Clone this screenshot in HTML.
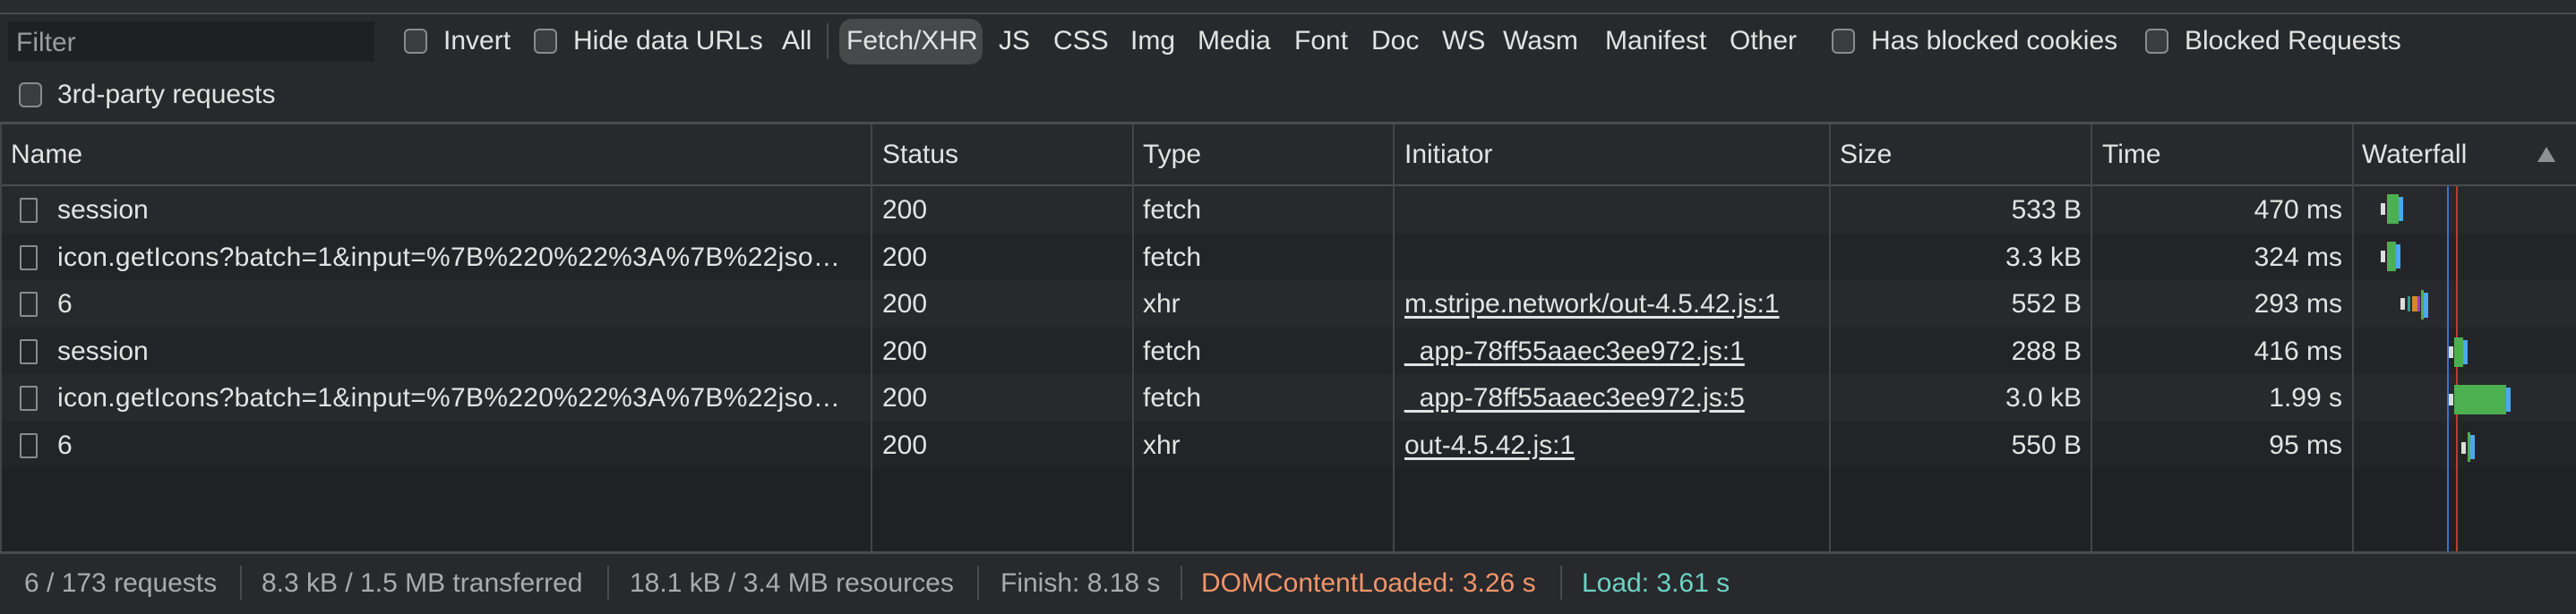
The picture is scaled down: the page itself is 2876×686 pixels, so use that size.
<!DOCTYPE html>
<html><head><meta charset="utf-8"><style>
*{box-sizing:border-box;margin:0;padding:0}
body{width:2876px;height:686px;background:#202124;font-family:"Liberation Sans",Arial,sans-serif;color:#e3e3e3;font-size:30px;position:relative;overflow:hidden}
.a{position:absolute;white-space:nowrap}
.cb{position:absolute;width:26px;height:28px;border:2px solid #8a8b8e;border-radius:6px;background:#3b3c3f}
.t{transform:translateY(-50%)}
.row{position:absolute;left:0;width:2876px;height:52.5px}
.vl{position:absolute;width:2px;background:#444548}
.ic{position:absolute;left:22px;width:20px;height:28px;border:2px solid #8a8b8e;border-radius:2px}
.r{text-align:right}
u{text-decoration:underline;text-underline-offset:4px}
.ft{color:#a8abb0}
.sep{position:absolute;top:632px;width:2px;height:38px;background:#4a4b4e}
.nm{letter-spacing:0.3px}
.f{font-size:30px}
</style></head><body>
<div class="a" style="left:0;top:0;width:2876px;height:14px;background:#2a2b2e"></div>
<div class="a" style="left:0;top:14px;width:2876px;height:2px;background:#4a4c50"></div>
<div class="a" style="left:0;top:16px;width:2876px;height:121px;background:#28292c"></div>
<div class="a" style="left:9px;top:24px;width:409px;height:45px;background:#1f2023"></div>
<div class="a t" style="left:18px;top:48px;color:#9a9ca0">Filter</div>
<div class="cb" style="left:451px;top:32px"></div><div class="a t" style="left:495px;top:46px">Invert</div>
<div class="cb" style="left:596px;top:32px"></div><div class="a t" style="left:640px;top:46px">Hide data URLs</div>
<div class="a t" style="left:873px;top:46px">All</div>
<div class="a" style="left:923px;top:26px;width:2px;height:40px;background:#4a4b4e"></div>
<div class="a" style="left:937px;top:21px;width:160px;height:51px;background:#474849;border-radius:14px"></div>
<div class="a t" style="left:945px;top:46px">Fetch/XHR</div>
<div class="a t" style="left:1115px;top:46px">JS</div>
<div class="a t" style="left:1176px;top:46px">CSS</div>
<div class="a t" style="left:1262px;top:46px">Img</div>
<div class="a t" style="left:1337px;top:46px">Media</div>
<div class="a t" style="left:1445px;top:46px">Font</div>
<div class="a t" style="left:1531px;top:46px">Doc</div>
<div class="a t" style="left:1610px;top:46px">WS</div>
<div class="a t" style="left:1678px;top:46px">Wasm</div>
<div class="a t" style="left:1792px;top:46px">Manifest</div>
<div class="a t" style="left:1931px;top:46px">Other</div>
<div class="cb" style="left:2045px;top:32px"></div><div class="a t" style="left:2089px;top:46px">Has blocked cookies</div>
<div class="cb" style="left:2395px;top:32px"></div><div class="a t" style="left:2439px;top:46px">Blocked Requests</div>
<div class="cb" style="left:21px;top:92px"></div><div class="a t" style="left:64px;top:106px">3rd-party requests</div>
<div class="a" style="left:0;top:136px;width:2876px;height:3px;background:#4a4c50"></div>
<div class="a" style="left:0;top:139px;width:2876px;height:68px;background:#28292c"></div>
<div class="a" style="left:0;top:206px;width:2876px;height:2px;background:#4a4c50"></div>
<div class="a t" style="left:12px;top:173px">Name</div>
<div class="a t" style="left:985px;top:173px">Status</div>
<div class="a t" style="left:1276px;top:173px">Type</div>
<div class="a t" style="left:1568px;top:173px">Initiator</div>
<div class="a t" style="left:2054px;top:173px">Size</div>
<div class="a t" style="left:2347px;top:173px">Time</div>
<div class="a t" style="left:2637px;top:173px">Waterfall</div>
<div class="a" style="left:2833px;top:164px;width:0;height:0;border-left:10px solid transparent;border-right:10px solid transparent;border-bottom:17px solid #8e9094"></div>

<div class="row" style="top:208px;background:#28292c"></div>
<div class="row" style="top:260.5px;background:#232427"></div>
<div class="row" style="top:313px;background:#28292c"></div>
<div class="row" style="top:365.5px;background:#232427"></div>
<div class="row" style="top:418px;background:#28292c"></div>
<div class="row" style="top:470.5px;background:#232427"></div>

<div class="vl" style="left:0;top:139px;height:480px"></div>
<div class="vl" style="left:972px;top:139px;height:480px"></div>
<div class="vl" style="left:1264px;top:139px;height:480px"></div>
<div class="vl" style="left:1555px;top:139px;height:480px"></div>
<div class="vl" style="left:2042px;top:139px;height:480px"></div>
<div class="vl" style="left:2334px;top:139px;height:480px"></div>
<div class="vl" style="left:2626px;top:139px;height:480px"></div>

<div class="ic" style="top:221px"></div><div class="a t" style="left:64px;top:235px">session</div>
<div class="ic" style="top:274px"></div><div class="a t nm" style="left:64px;top:288px">icon.getIcons?batch=1&amp;input=%7B%220%22%3A%7B%22jso…</div>
<div class="ic" style="top:326px"></div><div class="a t" style="left:64px;top:340px">6</div>
<div class="ic" style="top:379px"></div><div class="a t" style="left:64px;top:393px">session</div>
<div class="ic" style="top:431px"></div><div class="a t nm" style="left:64px;top:445px">icon.getIcons?batch=1&amp;input=%7B%220%22%3A%7B%22jso…</div>
<div class="ic" style="top:484px"></div><div class="a t" style="left:64px;top:498px">6</div>

<div class="a t" style="left:985px;top:235px">200</div><div class="a t" style="left:1276px;top:235px">fetch</div>
<div class="a t" style="left:985px;top:288px">200</div><div class="a t" style="left:1276px;top:288px">fetch</div>
<div class="a t" style="left:985px;top:340px">200</div><div class="a t" style="left:1276px;top:340px">xhr</div>
<div class="a t" style="left:985px;top:393px">200</div><div class="a t" style="left:1276px;top:393px">fetch</div>
<div class="a t" style="left:985px;top:445px">200</div><div class="a t" style="left:1276px;top:445px">fetch</div>
<div class="a t" style="left:985px;top:498px">200</div><div class="a t" style="left:1276px;top:498px">xhr</div>

<div class="a t" style="left:1568px;top:340px"><u>m.stripe.network/out-4.5.42.js:1</u></div>
<div class="a t" style="left:1568px;top:393px"><u>_app-78ff55aaec3ee972.js:1</u></div>
<div class="a t" style="left:1568px;top:445px"><u>_app-78ff55aaec3ee972.js:5</u></div>
<div class="a t" style="left:1568px;top:498px"><u>out-4.5.42.js:1</u></div>

<div class="a t r" style="right:552px;top:235px">533 B</div><div class="a t r" style="right:261px;top:235px">470 ms</div>
<div class="a t r" style="right:552px;top:288px">3.3 kB</div><div class="a t r" style="right:261px;top:288px">324 ms</div>
<div class="a t r" style="right:552px;top:340px">552 B</div><div class="a t r" style="right:261px;top:340px">293 ms</div>
<div class="a t r" style="right:552px;top:393px">288 B</div><div class="a t r" style="right:261px;top:393px">416 ms</div>
<div class="a t r" style="right:552px;top:445px">3.0 kB</div><div class="a t r" style="right:261px;top:445px">1.99 s</div>
<div class="a t r" style="right:552px;top:498px">550 B</div><div class="a t r" style="right:261px;top:498px">95 ms</div>

<div class="a" style="left:2732px;top:208px;width:2px;height:410px;background:#3b6fd1"></div>
<div class="a" style="left:2742px;top:208px;width:2px;height:410px;background:#c0392b"></div>
<div class="a" style="left:2658px;top:227px;width:5px;height:13px;background:#ddd"></div>
<div class="a" style="left:2665px;top:217px;width:13px;height:33px;background:#4caf50"></div>
<div class="a" style="left:2678px;top:220px;width:5px;height:27px;background:#4aa8f0"></div>
<div class="a" style="left:2658px;top:280px;width:5px;height:13px;background:#ddd"></div>
<div class="a" style="left:2665px;top:270px;width:10px;height:33px;background:#4caf50"></div>
<div class="a" style="left:2675px;top:273px;width:5px;height:27px;background:#4aa8f0"></div>
<div class="a" style="left:2680px;top:333px;width:5px;height:13px;background:#ddd"></div>
<div class="a" style="left:2688px;top:331px;width:3px;height:17px;background:#2a9d8f"></div>
<div class="a" style="left:2693px;top:331px;width:6px;height:17px;background:#d4892c"></div>
<div class="a" style="left:2699px;top:331px;width:3px;height:17px;background:#a534c9"></div>
<div class="a" style="left:2703px;top:324px;width:3px;height:33px;background:#4caf50"></div>
<div class="a" style="left:2706px;top:327px;width:5px;height:28px;background:#4aa8f0"></div>
<div class="a" style="left:2734px;top:387px;width:5px;height:13px;background:#ddd"></div>
<div class="a" style="left:2740px;top:377px;width:10px;height:33px;background:#4caf50"></div>
<div class="a" style="left:2750px;top:380px;width:5px;height:27px;background:#4aa8f0"></div>
<div class="a" style="left:2734px;top:440px;width:5px;height:13px;background:#ddd"></div>
<div class="a" style="left:2740px;top:430px;width:58px;height:33px;background:#4caf50"></div>
<div class="a" style="left:2798px;top:433px;width:5px;height:27px;background:#4aa8f0"></div>
<div class="a" style="left:2748px;top:494px;width:5px;height:13px;background:#ddd"></div>
<div class="a" style="left:2755px;top:483px;width:3px;height:33px;background:#4caf50"></div>
<div class="a" style="left:2758px;top:486px;width:5px;height:27px;background:#4aa8f0"></div>

<div class="a" style="left:0;top:616px;width:2876px;height:3px;background:#4a4c50"></div>
<div class="a" style="left:0;top:619px;width:2876px;height:67px;background:#28292c"></div>
<div class="a t ft f" style="left:27px;top:652px">6 / 173 requests</div>
<div class="sep" style="left:268px"></div>
<div class="a t ft f" style="left:292px;top:652px">8.3 kB / 1.5 MB transferred</div>
<div class="sep" style="left:678px"></div>
<div class="a t ft f" style="left:703px;top:652px">18.1 kB / 3.4 MB resources</div>
<div class="sep" style="left:1091px"></div>
<div class="a t ft f" style="left:1117px;top:652px">Finish: 8.18 s</div>
<div class="sep" style="left:1318px"></div>
<div class="a t f" style="left:1341px;top:652px;color:#f0956a">DOMContentLoaded: 3.26 s</div>
<div class="sep" style="left:1742px"></div>
<div class="a t f" style="left:1766px;top:652px;color:#6cd3c5">Load: 3.61 s</div>
</body></html>
